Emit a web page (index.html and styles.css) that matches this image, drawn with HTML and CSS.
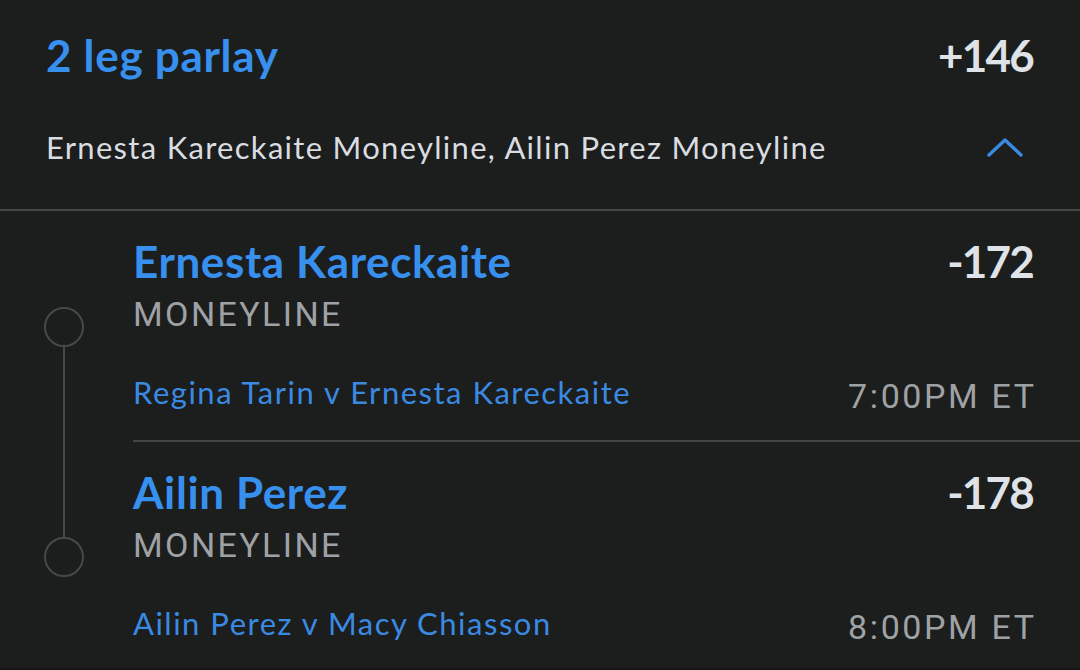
FILE: index.html
```html
<!DOCTYPE html>
<html lang="en">
<head>
  <meta charset="UTF-8">
  <meta name="viewport" content="width=device-width, initial-scale=1.0">
  <title>2 leg parlay</title>
  <link rel="stylesheet" href="styles.css">
</head>
<body>
  <div class="betCard">
    <div class="summary">
      <div class="summaryTop">
        <span class="parlayTitle">2 leg parlay</span>
        <span class="odds">+146</span>
      </div>
      <div class="summarySub">
        <span>Ernesta Kareckaite Moneyline, Ailin Perez Moneyline</span>
        <svg class="chevron" width="38" height="23" viewBox="0 0 38 23">
          <path d="M3 19 L19 4 L35 19" fill="none" stroke="#3a8ae2" stroke-width="3.4" stroke-linecap="round" stroke-linejoin="round"/>
        </svg>
      </div>
    </div>

    <div class="leg first">
      <div class="rail">
        <div class="seg"></div>
        <div class="dot"></div>
        <div class="seg on"></div>
      </div>
      <div class="legBody">
        <div class="legHead">
          <span class="pick">Ernesta Kareckaite</span>
          <span class="odds">-172</span>
        </div>
        <div class="market">MONEYLINE</div>
        <div class="legFoot">
          <span class="matchup">Regina Tarin v Ernesta Kareckaite</span>
          <span class="time">7:00PM ET</span>
        </div>
      </div>
    </div>

    <div class="leg last">
      <div class="rail">
        <div class="seg on"></div>
        <div class="dot"></div>
        <div class="seg"></div>
      </div>
      <div class="legBody">
        <div class="legHead">
          <span class="pick">Ailin Perez</span>
          <span class="odds">-178</span>
        </div>
        <div class="market">MONEYLINE</div>
        <div class="legFoot">
          <span class="matchup">Ailin Perez v Macy Chiasson</span>
          <span class="time">8:00PM ET</span>
        </div>
      </div>
    </div>
  </div>
</body>
</html>
```

FILE: styles.css
```css
html, body {
  margin: 0;
  padding: 0;
  background: #141515;
}
.betCard {
  width: 1080px;
  height: 668px;
  overflow: hidden;
  background: #1c1d1d;
  font-family: Lato, "Noto Sans", sans-serif;
}
.summary {
  padding: 29px 46px 0 46px;
  height: 180px;
  border-bottom: solid #444546 2px;
}
.summaryTop {
  display: flex;
  justify-content: space-between;
  font-size: 44px;
  line-height: 53px;
  font-weight: bold;
}
.parlayTitle {
  color: #3790ee;
  letter-spacing: 0.7px;
}
.odds {
  color: #dfe2e6;
  letter-spacing: -1.8px;
  margin-right: 1px;
}
.summarySub {
  display: flex;
  justify-content: space-between;
  align-items: center;
  margin-top: 47px;
  font-size: 31px;
  line-height: 36px;
  letter-spacing: 1.3px;
  color: #d9dce0;
}
.chevron {
  margin-right: 10px;
}
.leg {
  display: flex;
}
.rail {
  width: 133px;
  flex: none;
  display: flex;
  flex-direction: column;
  padding-left: 44px;
  box-sizing: border-box;
}
.seg {
  flex: 1;
  width: 2px;
  margin-left: 19px;
}
.seg.on {
  background: #47484a;
}
.dot {
  width: 36px;
  height: 36px;
  border: solid #47484a 2px;
  border-radius: 50%;
}
.legBody {
  flex: 1;
  padding: 24px 46px 24px 0;
}
.first .legBody {
  border-bottom: solid #444546 2px;
}
.legHead {
  display: flex;
  justify-content: space-between;
  font-size: 44px;
  line-height: 53px;
  font-weight: bold;
}
.pick {
  color: #3790ee;
  letter-spacing: 0.6px;
}
.market {
  margin-top: 6px;
  font-family: Roboto, sans-serif;
  font-size: 34px;
  line-height: 40px;
  letter-spacing: 2.4px;
  color: #9fa2a5;
}
.legFoot {
  display: flex;
  justify-content: space-between;
  align-items: flex-start;
  margin-top: 40px;
}
.matchup {
  font-size: 31px;
  line-height: 36px;
  letter-spacing: 1.5px;
  color: #3a8ae2;
}
.time {
  margin-top: 2px;
  font-family: Roboto, sans-serif;
  font-size: 34px;
  line-height: 40px;
  letter-spacing: 2.6px;
  margin-right: -2.6px;
  color: #9fa2a5;
}
```
